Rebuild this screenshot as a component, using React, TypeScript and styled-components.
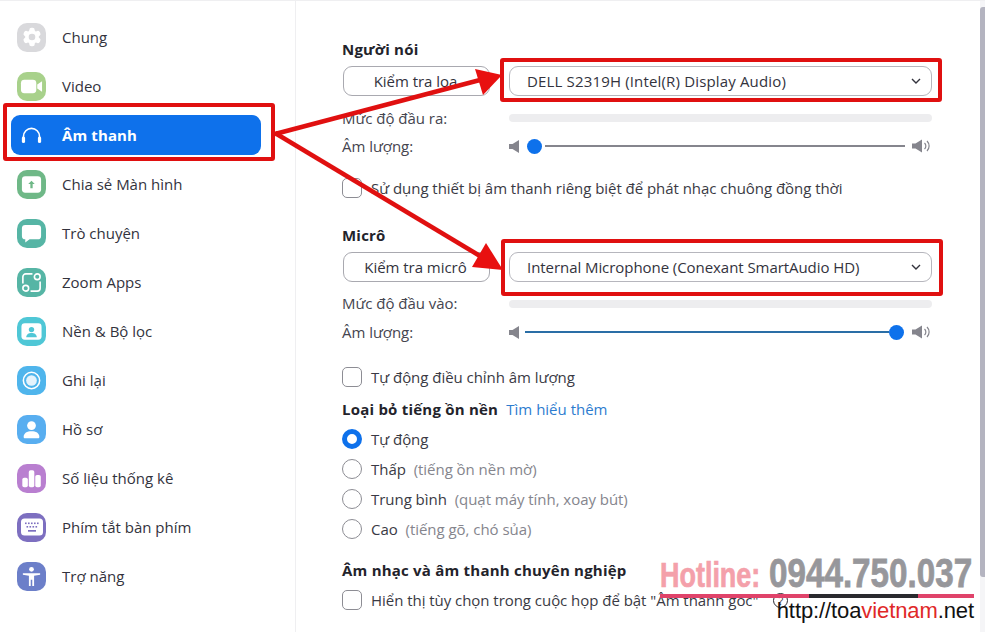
import React from "react";
import styled, { createGlobalStyle } from "styled-components";

const Global = createGlobalStyle`
  html, body { margin: 0; padding: 0; background: #fff; }
  body { font-family: "Open Sans", "Noto Sans", sans-serif; color: #2b2b33; overflow: hidden; }
  * { box-sizing: border-box; }
`;

const Page = styled.div`
  position: relative;
  width: 985px;
  height: 632px;
  overflow: hidden;
  background: #fff;
  display: flex;
  border-top: 1px solid #efeff1;
`;
const Sidebar = styled.nav`
  width: 296px;
  flex: none;
  border-right: 1px solid #efeff1;
  padding: 16px 11px 0 11px;
  display: flex;
  flex-direction: column;
  gap: 9px;
`;
const Item = styled.div<{ $active?: boolean }>`
  height: 40px;
  width: 250px;
  display: flex;
  align-items: center;
  gap: 16px;
  padding-left: 6px;
  border-radius: 9px;
  font-size: 15px;
  letter-spacing: ${(p) => (p.$active ? "0.12px" : "0")};
  font-weight: ${(p) => (p.$active ? 700 : 400)};
  color: ${(p) => (p.$active ? "#fff" : "#33333d")};
  background: ${(p) => (p.$active ? "#0e71eb" : "transparent")};
`;
const IconTile = styled.span<{ $color: string }>`
  width: 29px;
  height: 29px;
  flex: none;
  border-radius: 10px;
  background: ${(p) => p.$color};
  display: flex;
  align-items: center;
  justify-content: center;
`;
const Content = styled.main`
  flex: 1;
  padding: 36px 0 0 46px;
  display: flex;
  flex-direction: column;
  font-size: 15px;
  letter-spacing: -0.04px;
`;
const Heading = styled.div<{ $top?: number }>`
  font-weight: 700;
  line-height: 24px;
  height: 24px;
  color: #23232b;
  letter-spacing: 0.22px;
  white-space: nowrap;
  margin-top: ${(p) => p.$top ?? 0}px;
`;
const ControlRow = styled.div`
  display: flex;
  gap: 19px;
  margin-top: 5px;
  margin-left: 1px;
  height: 30px;
`;
const TestButton = styled.div`
  width: 147px;
  height: 30px;
  border: 1px solid #a9a9b0;
  border-radius: 9px;
  display: flex;
  align-items: center;
  justify-content: center;
  color: #33333d;
  padding-right: 2px;
`;
const Select = styled.div<{ $tracking: number }>`
  width: 423px;
  height: 30px;
  border: 1px solid #b6b6bd;
  border-radius: 9px;
  display: flex;
  align-items: center;
  justify-content: space-between;
  padding: 0 9px 0 17px;
  color: #33333d;
  letter-spacing: ${(p) => p.$tracking}px;
`;
const LabelRow = styled.div<{ $top: number }>`
  display: flex;
  align-items: center;
  height: 24px;
  margin-top: ${(p) => p.$top}px;
  color: #45454f;
`;
const Label = styled.span`
  width: 167px;
  flex: none;
`;
const Level = styled.div<{ $shift: number }>`
  width: 423px;
  height: 8px;
  border-radius: 4px;
  background: #ededef;
  margin-top: ${(p) => p.$shift}px;
`;
const Slider = styled.div`
  width: 422px;
  display: flex;
  align-items: center;
`;
const Thumb = styled.span<{ $margin: string }>`
  width: 15px;
  height: 15px;
  border-radius: 50%;
  background: #0e71eb;
  flex: none;
  margin: ${(p) => p.$margin};
`;
const Track = styled.span<{ $color: string; $margin: string }>`
  flex: 1;
  height: 2px;
  background: ${(p) => p.$color};
  margin: ${(p) => p.$margin};
`;
const CheckRow = styled.div<{ $top: number }>`
  display: flex;
  align-items: center;
  height: 24px;
  gap: 9px;
  margin-top: ${(p) => p.$top}px;
  color: #3a3a44;
  white-space: nowrap;
`;
const Box = styled.span`
  width: 20px;
  height: 20px;
  flex: none;
  border: 1px solid #8d8d94;
  border-radius: 5px;
  background: #fff;
`;
const Radio = styled.span<{ $on?: boolean }>`
  width: 20px;
  height: 20px;
  flex: none;
  border-radius: 50%;
  background: #fff;
  border: ${(p) => (p.$on ? "5px solid #0e71eb" : "1px solid #8d8d94")};
`;
const Hint = styled.span`
  color: #85858d;
  margin-left: 4px;
`;
const Link = styled.span`
  color: #2d7ccf;
  font-weight: 400;
  letter-spacing: 0;
  margin-left: 4px;
`;
const Help = styled.span`
  display: inline-flex;
  width: 15px;
  height: 15px;
  border: 1px solid #2b2b33;
  border-radius: 50%;
  align-items: center;
  justify-content: center;
  font-size: 11px;
  margin-left: 15px;
  vertical-align: 1px;
`;
const ScrollTrack = styled.div`
  position: absolute;
  right: 0;
  top: 0;
  width: 5px;
  height: 100%;
  padding: 6px 0 55px;
  background: #f5f5f7;
`;
const ScrollThumb = styled.div`
  height: 100%;
  border-radius: 3px 0 0 3px;
  background: #b4b4c0;
`;
const Overlay = styled.svg`
  position: absolute;
  left: 0;
  top: -1px;
  pointer-events: none;
`;
const Watermark = styled.div`
  position: absolute;
  left: 660px;
  top: 554px;
  width: 314px;
  font-family: "Liberation Sans", sans-serif;
`;
const BigLine = styled.div`
  display: flex;
  align-items: baseline;
  gap: 9px;
  height: 36px;
  line-height: 36px;
  font-weight: 700;
  white-space: nowrap;
`;
const Hot = styled.span`
  color: #f4a0aa;
  display: inline-block;
  font-size: 35px;
  -webkit-text-stroke: 0.7px #f4a0aa;
  transform: scaleX(0.77);
  transform-origin: left center;
  width: 100px;
`;
const Phone = styled.span`
  color: #97979b;
  display: inline-block;
  font-size: 41px;
  -webkit-text-stroke: 0.8px #97979b;
  transform: scaleX(0.81);
  transform-origin: left center;
  width: 204px;
`;
const Rule = styled.div`
  height: 4px;
  margin-top: 3px;
  background: linear-gradient(90deg, #e0436a 0 149px, #2a2a2e 149px 258px, #e0436a 258px);
`;
const Url = styled.div`
  text-align: right;
  font-size: 22px;
  line-height: 24px;
  margin-top: 1px;
  color: #111;
  letter-spacing: -0.1px;
  span { color: #e02828; }
`;

const Gear = () => (
  <svg width="22" height="22" viewBox="0 0 24 24" fill="#fff">
    {[0, 60, 120].map((a) => (
      <rect key={a} x="9" y="2" width="6" height="20" rx="2.500" transform={`rotate(${a} 12 12)`} />
    ))}
    <circle cx="12" cy="12" r="7.500" />
    <circle cx="12" cy="12" r="3.600" fill="#d9d9dc" />
  </svg>
);
const Cam = () => (
  <svg width="23" height="23" viewBox="0 0 24 24" fill="#fff">
    <rect x="1" y="5" width="16" height="14" rx="3.500" />
    <path d="M18 10l5-3.500v11L18 14z" />
  </svg>
);
const Headphones = () => (
  <svg width="21" height="17" viewBox="0 0 22 18" fill="none">
    <path d="M2.500 12V10a8.500 8.500 0 0117 0v2" stroke="#fff" strokeWidth="1.700" />
    <rect x="0.800" y="10" width="3.400" height="7" rx="1.700" fill="#fff" />
    <rect x="17.800" y="10" width="3.400" height="7" rx="1.700" fill="#fff" />
  </svg>
);
const Share = () => (
  <svg width="23" height="23" viewBox="0 0 24 24">
    <rect x="2" y="3.500" width="20" height="17" rx="3.500" fill="#fff" />
    <path d="M12 8l3.400 3.600h-2.200V16h-2.400v-4.400H8.600z" fill="#6fb887" />
  </svg>
);
const Chat = () => (
  <svg width="23" height="23" viewBox="0 0 24 24" fill="#fff">
    <path d="M5.500 3h13A3.500 3.500 0 0122 6.500v8a3.500 3.500 0 01-3.500 3.500H10l-4.500 3.500V18A3.500 3.500 0 012 14.500v-8A3.500 3.500 0 015.500 3z" />
  </svg>
);
const Apps = () => (
  <svg width="23" height="23" viewBox="0 0 24 24" fill="none" stroke="#fff" strokeWidth="1.700">
    <path d="M13 3H6a3 3 0 00-3 3v7" />
    <path d="M11 21h7a3 3 0 003-3v-7" />
    <circle cx="18" cy="6" r="3" />
    <circle cx="6" cy="18" r="3" />
  </svg>
);
const Background = () => (
  <svg width="23" height="23" viewBox="0 0 24 24">
    <rect x="1.500" y="3.500" width="21" height="17" rx="3.500" fill="#fff" />
    <circle cx="12" cy="10" r="2.800" fill="#4fc7d6" />
    <path d="M6.500 18c0-3 2.500-4.500 5.500-4.500s5.500 1.500 5.500 4.500z" fill="#4fc7d6" />
  </svg>
);
const Record = () => (
  <svg width="23" height="23" viewBox="0 0 24 24">
    <circle cx="12" cy="12" r="8.500" fill="none" stroke="#fff" strokeWidth="1.600" />
    <circle cx="12" cy="12" r="5.600" fill="#e4f3fc" />
  </svg>
);
const Person = () => (
  <svg width="21" height="21" viewBox="0 0 24 24" fill="#fff">
    <circle cx="12" cy="7.500" r="5" />
    <path d="M3 20.500c0-4.500 4-6.500 9-6.500s9 2 9 6.500c0 .8-.6 1.500-1.500 1.500h-15C3.600 22 3 21.300 3 20.500z" />
  </svg>
);
const Stats = () => (
  <svg width="21" height="21" viewBox="0 0 24 24" fill="#fff">
    <rect x="1.500" y="11" width="6.300" height="11" rx="2" />
    <rect x="8.900" y="2.500" width="6.300" height="19.500" rx="2" />
    <rect x="16.300" y="8" width="6.300" height="14" rx="2" />
  </svg>
);
const Keyboard = () => (
  <svg width="24" height="24" viewBox="0 0 24 24">
    <rect x="1" y="3.500" width="22" height="17" rx="3.500" fill="#fff" />
    {[5, 8, 11, 14, 17].map((x) => (
      <rect key={x} x={x} y="7.500" width="1.600" height="1.600" fill="#7d6fc0" />
    ))}
    {[6.5, 9.5, 12.5, 15.5].map((x) => (
      <rect key={x} x={x} y="11" width="1.600" height="1.600" fill="#7d6fc0" />
    ))}
    <rect x="8" y="15" width="8" height="1.700" fill="#7d6fc0" />
  </svg>
);
const Access = () => (
  <svg width="23" height="23" viewBox="0 0 24 24" fill="#fff">
    <circle cx="12" cy="4.500" r="2.500" />
    <path d="M3 8.500h18v1.800l-6.300 1V22h-1.900v-6.500h-1.600V22H9.300V11.300L3 10.300z" />
  </svg>
);
const Chevron = () => (
  <svg width="12" height="12" viewBox="0 0 12 12" fill="none" stroke="#33333d" strokeWidth="1.400">
    <path d="M2 4l4 4 4-4" />
  </svg>
);
const SpeakerLow = () => (
  <svg width="11" height="13" viewBox="0 0 11 13" fill="#85858d">
    <path d="M0 4h3.500L10 0v13L3.500 9H0z" />
  </svg>
);
const SpeakerHigh = () => (
  <svg width="19" height="14" viewBox="0 0 19 14" fill="none">
    <path d="M0 4.500h3.500L10 .5v13l-6.500-4H0z" fill="#85858d" />
    <path d="M12.500 4a4 4 0 010 6M15 2a7 7 0 010 10" stroke="#85858d" strokeWidth="1.200" />
  </svg>
);

const menu: [string, string, React.ReactNode][] = [
  ["Chung", "#d9d9dc", <Gear />],
  ["Video", "#a8d18b", <Cam />],
  ["Âm thanh", "transparent", <Headphones />],
  ["Chia sẻ Màn hình", "#6fb887", <Share />],
  ["Trò chuyện", "#56b5a5", <Chat />],
  ["Zoom Apps", "#56b5a5", <Apps />],
  ["Nền & Bộ lọc", "#4fc7d6", <Background />],
  ["Ghi lại", "#4fb5ec", <Record />],
  ["Hồ sơ", "#58aef0", <Person />],
  ["Số liệu thống kê", "#b97fd0", <Stats />],
  ["Phím tắt bàn phím", "#7d6fc0", <Keyboard />],
  ["Trợ năng", "#6c7fc9", <Access />],
];

const ArrowOverlay = () => (
  <Overlay width="985" height="632" viewBox="0 0 985 632">
    <g fill="none" stroke="#e01010" strokeWidth="4">
      <rect x="5" y="105" width="268" height="54" rx="1" />
      <rect x="502" y="60" width="438" height="40" rx="1" />
      <rect x="503" y="241" width="438" height="53" rx="1" />
    </g>
    <g stroke="#e01010" strokeWidth="4.500" fill="none">
      <path d="M275 134L480 80" />
      <path d="M275 133L480 256" />
    </g>
    <path d="M502 75L475 69L483 95z" fill="#e81010" />
    <path d="M503 270L472 267L486 243z" fill="#e81010" />
  </Overlay>
);

export default function App() {
  return (
    <Page>
      <Global />
      <Sidebar>
        {menu.map(([label, color, icon], i) => (
          <Item key={label} $active={i === 2}>
            <IconTile $color={color}>{icon}</IconTile>
            {label}
          </Item>
        ))}
      </Sidebar>
      <Content>
        <Heading>Người nói</Heading>
        <ControlRow>
          <TestButton>Kiểm tra loa</TestButton>
          <Select $tracking={0.16}>
            DELL S2319H (Intel(R) Display Audio)
            <Chevron />
          </Select>
        </ControlRow>
        <LabelRow $top={10}>
          <Label>Mức độ đầu ra:</Label>
          <Level $shift={-1} />
        </LabelRow>
        <LabelRow $top={4}>
          <Label>Âm lượng:</Label>
          <Slider>
            <SpeakerLow />
            <Thumb $margin="0 3px 0 7px" />
            <Track $color="#85858d" $margin="0 7px 0 0" />
            <SpeakerHigh />
          </Slider>
        </LabelRow>
        <CheckRow $top={18}>
          <Box />
          Sử dụng thiết bị âm thanh riêng biệt để phát nhạc chuông đồng thời
        </CheckRow>
        <Heading $top={23}>Micrô</Heading>
        <ControlRow>
          <TestButton>Kiểm tra micrô</TestButton>
          <Select $tracking={-0.06}>
            Internal Microphone (Conexant SmartAudio HD)
            <Chevron />
          </Select>
        </ControlRow>
        <LabelRow $top={9}>
          <Label>Mức độ đầu vào:</Label>
          <Level $shift={2} />
        </LabelRow>
        <LabelRow $top={5}>
          <Label>Âm lượng:</Label>
          <Slider>
            <SpeakerLow />
            <Track $color="#2a6ea6" $margin="0 0 0 5px" />
            <Thumb $margin="0 8px 0 0" />
            <SpeakerHigh />
          </Slider>
        </LabelRow>
        <CheckRow $top={21}>
          <Box />
          Tự động điều chỉnh âm lượng
        </CheckRow>
        <Heading $top={8}>
          Loại bỏ tiếng ồn nền <Link>Tìm hiểu thêm</Link>
        </Heading>
        <CheckRow $top={6}>
          <Radio $on />
          Tự động
        </CheckRow>
        <CheckRow $top={6}>
          <Radio />
          <span>
            Thấp <Hint>(tiếng ồn nền mờ)</Hint>
          </span>
        </CheckRow>
        <CheckRow $top={6}>
          <Radio />
          <span>
            Trung bình <Hint>(quạt máy tính, xoay bút)</Hint>
          </span>
        </CheckRow>
        <CheckRow $top={6}>
          <Radio />
          <span>
            Cao <Hint>(tiếng gõ, chó sủa)</Hint>
          </span>
        </CheckRow>
        <Heading $top={17}>Âm nhạc và âm thanh chuyên nghiệp</Heading>
        <CheckRow $top={6}>
          <Box />
          <span>
            Hiển thị tùy chọn trong cuộc họp để bật "Âm thanh gốc"
            <Help>?</Help>
          </span>
        </CheckRow>
      </Content>
      <ScrollTrack>
        <ScrollThumb />
      </ScrollTrack>
      <ArrowOverlay />
      <Watermark>
        <BigLine>
          <Hot>Hotline:</Hot>
          <Phone>0944.750.037</Phone>
        </BigLine>
        <Rule />
        <Url>
          http://toa<span>vietnam</span>.net
        </Url>
      </Watermark>
    </Page>
  );
}
